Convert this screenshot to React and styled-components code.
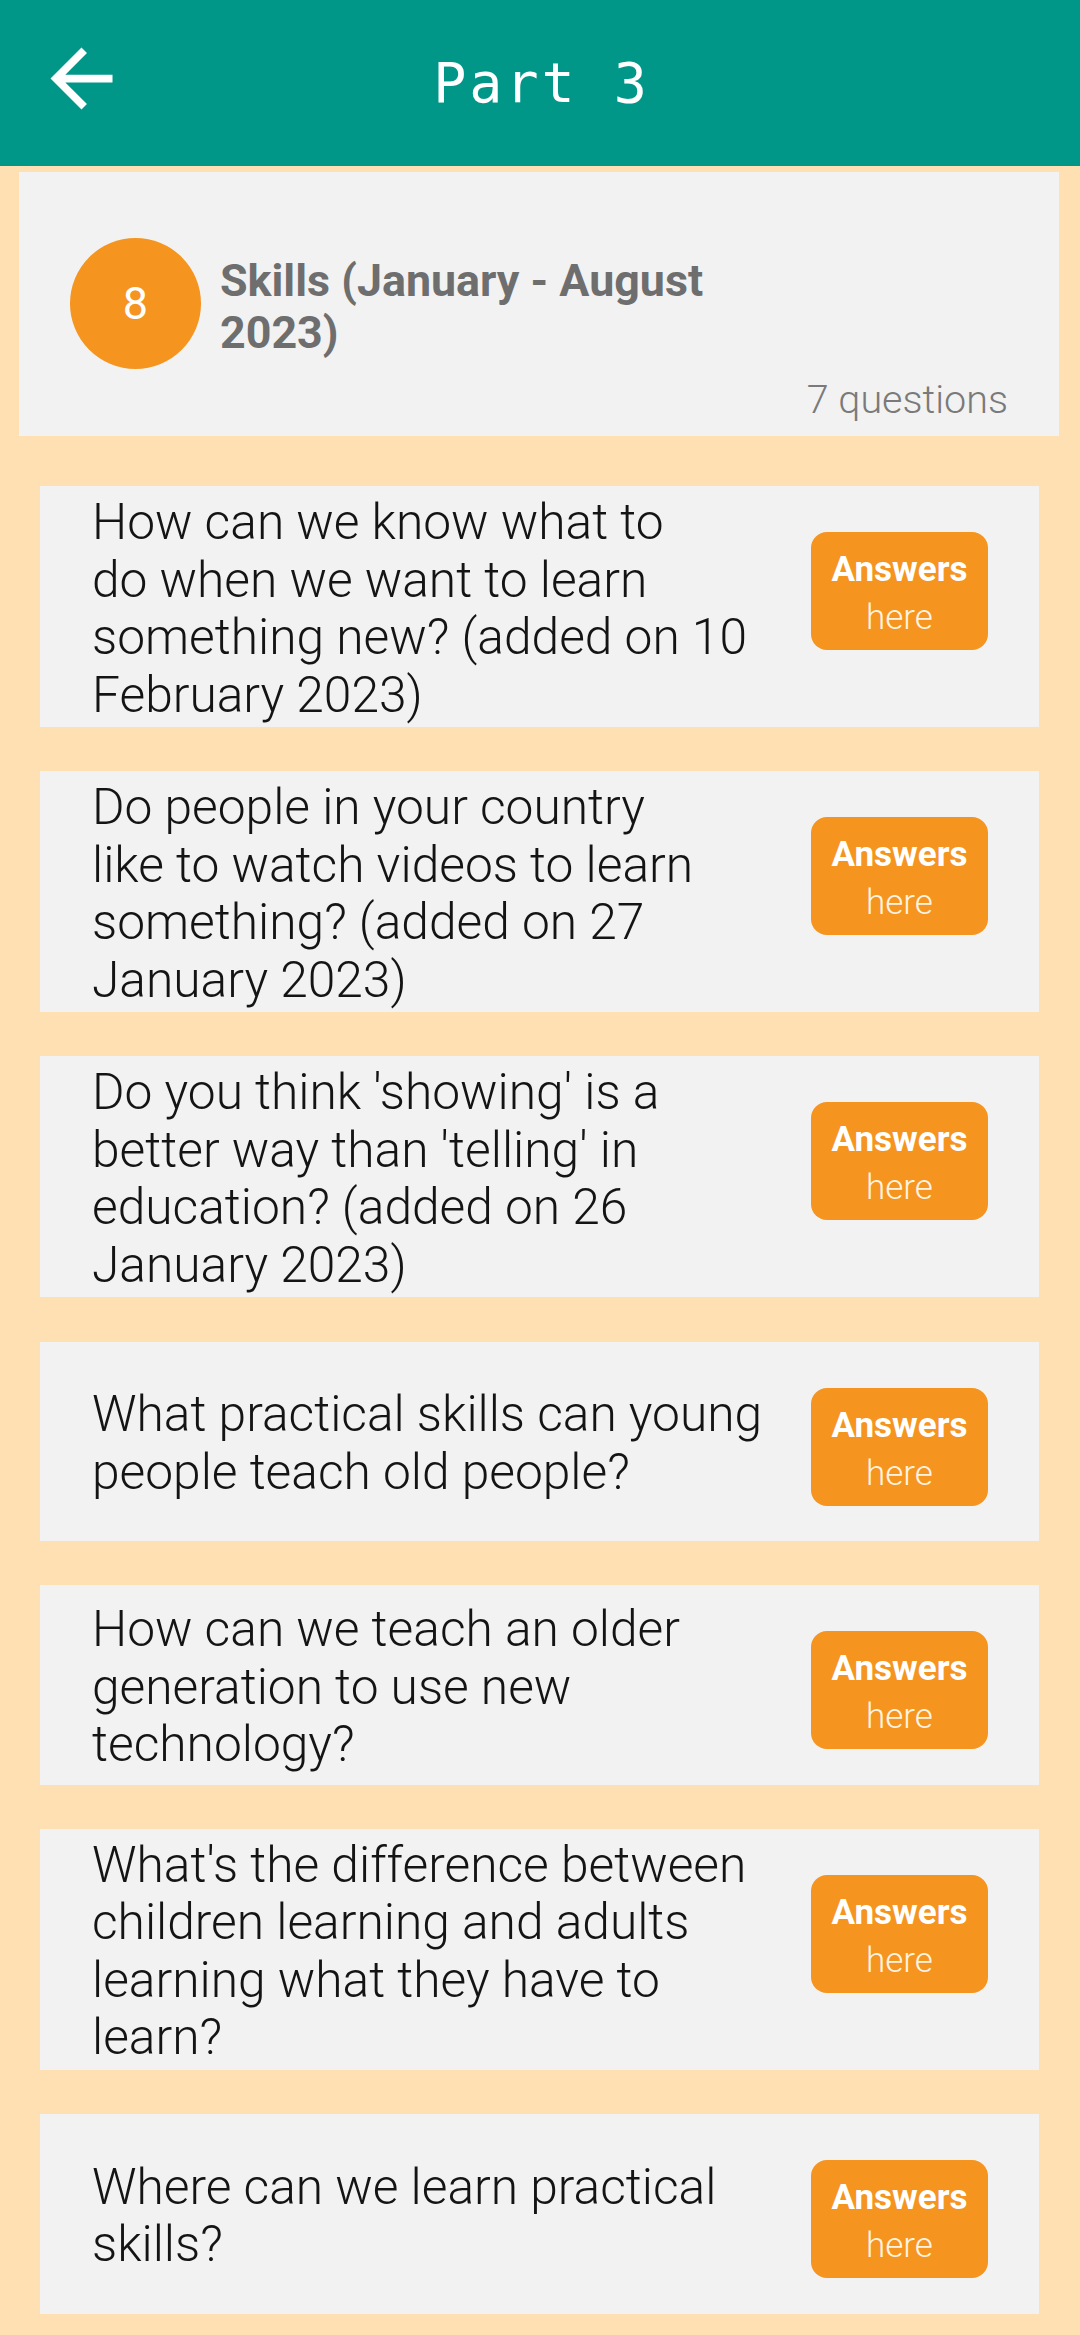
import React from "react";
import styled, { createGlobalStyle } from "styled-components";

const GlobalStyle = createGlobalStyle`
  html, body {
    margin: 0;
    padding: 0;
    background: #ffe0b2;
  }
  body {
    font-family: Roboto, "Noto Sans", "Liberation Sans", sans-serif;
    min-height: 2335px;
  }
  * { box-sizing: border-box; }
`;

const Page = styled.div`
  display: flex;
  flex-direction: column;
  min-height: 2335px;
  background: #ffe0b2;
`;

const AppBar = styled.header`
  display: grid;
  grid-template-columns: 1fr auto 1fr;
  align-items: center;
  height: 166px;
  background: #009688;
`;

const BackButton = styled.button`
  justify-self: start;
  align-self: start;
  margin: 32px 0 0 35px;
  padding: 0;
  border: 0;
  background: transparent;
  width: 93px;
  height: 93px;
  display: flex;
  color: #ffffff;
`;

const Title = styled.h1`
  margin: 0;
  padding-left: 3px;
  font-family: "DejaVu Sans Mono", "Liberation Mono", monospace;
  font-weight: 400;
  font-size: 55px;
  letter-spacing: 3px;
  color: #ffffff;
`;

const Content = styled.main`
  display: flex;
  flex-direction: column;
  padding-bottom: 20px;
`;

const TopicCard = styled.section`
  margin: 6px 21px 0 19px;
  padding: 66px 51px 13px 51px;
  background: #f2f2f2;
  display: flex;
  flex-direction: column;
  gap: 7px;
`;

const TopicRow = styled.div`
  display: flex;
  align-items: center;
  gap: 19px;
`;

const Badge = styled.div`
  width: 131px;
  height: 131px;
  flex-shrink: 0;
  border-radius: 50%;
  background: #f5941f;
  color: #ffffff;
  display: flex;
  align-items: center;
  justify-content: center;
  font-size: 45px;
  font-weight: 400;
`;

const TopicTitle = styled.h2`
  margin: 0;
  padding-top: 6px;
  font-size: 44.8px;
  line-height: 51.5px;
  font-weight: 700;
  color: #6e6e6e;
`;

const Count = styled.div`
  align-self: flex-end;
  font-size: 39.5px;
  line-height: 47px;
  font-weight: 300;
  color: #7a7a7a;
`;

const List = styled.div`
  display: flex;
  flex-direction: column;
  gap: 44.2px;
  margin: 50px 41px 0 40px;
`;

const QuestionCard = styled.article`
  display: flex;
  align-items: center;
  min-height: 199.5px;
  padding: 8px 51px 3px 52px;
  background: #f2f2f2;
`;

const QuestionText = styled.p`
  flex: 1;
  margin: 0;
  font-size: 49.7px;
  line-height: 57.5px;
  font-weight: 300;
  color: #141414;
`;

const AnswerButton = styled.button`
  align-self: flex-start;
  flex-shrink: 0;
  margin-top: 38px;
  width: 177px;
  height: 118px;
  padding: 14px 0 8px;
  border: 0;
  border-radius: 16px;
  background: #f5941f;
  display: flex;
  flex-direction: column;
  align-items: center;
  font-family: Roboto, "Noto Sans", sans-serif;
`;

const AnswerLine = styled.span`
  font-size: 35px;
  line-height: 48px;
  font-weight: ${(p) => (p.$bold ? 700 : 300)};
  color: ${(p) => (p.$bold ? "#ffffff" : "#fff4e2")};
`;

const questions = [
  ["How can we know what to", "do when we want to learn", "something new? (added on 10", "February 2023)"],
  ["Do people in your country", "like to watch videos to learn", "something? (added on 27", "January 2023)"],
  ["Do you think 'showing' is a", "better way than 'telling' in", "education? (added on 26", "January 2023)"],
  ["What practical skills can young", "people teach old people?"],
  ["How can we teach an older", "generation to use new", "technology?"],
  ["What's the difference between", "children learning and adults", "learning what they have to", "learn?"],
  ["Where can we learn practical", "skills?"],
];

function Lines({ lines }) {
  return lines.map((l, i) => (
    <React.Fragment key={i}>
      {l}
      {i < lines.length - 1 && <br />}
    </React.Fragment>
  ));
}

export default function App() {
  return (
    <Page>
      <GlobalStyle />
      <AppBar>
        <BackButton aria-label="Back">
          <svg width="93" height="93" viewBox="0 0 24 24" fill="currentColor">
            <path d="M20 11H7.83l5.59-5.59L12 4l-8 8 8 8 1.41-1.41L7.83 13H20v-2z" />
          </svg>
        </BackButton>
        <Title>Part 3</Title>
        <span />
      </AppBar>
      <Content>
        <TopicCard>
          <TopicRow>
            <Badge>8</Badge>
            <TopicTitle>
              Skills (January - August
              <br />
              2023)
            </TopicTitle>
          </TopicRow>
          <Count>7 questions</Count>
        </TopicCard>
        <List>
          {questions.map((q, i) => (
            <QuestionCard key={i}>
              <QuestionText>
                <Lines lines={q} />
              </QuestionText>
              <AnswerButton>
                <AnswerLine $bold>Answers</AnswerLine>
                <AnswerLine>here</AnswerLine>
              </AnswerButton>
            </QuestionCard>
          ))}
        </List>
      </Content>
    </Page>
  );
}
